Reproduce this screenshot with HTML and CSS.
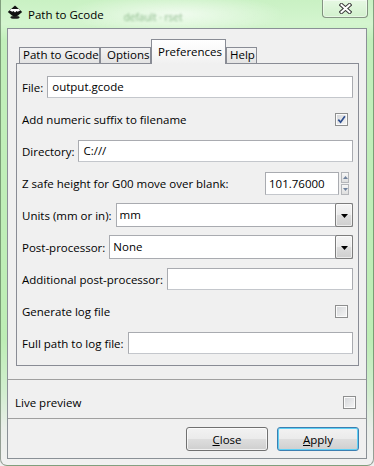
FILE: index.html
```html
<!DOCTYPE html>
<html lang="en">
<head>
<meta charset="utf-8">
<title>Path to Gcode</title>
<link rel="stylesheet" href="styles.css">
</head>
<body>
<div class="window">
  <div class="titlebar">
    <svg class="app-icon" width="16" height="14" viewBox="0 0 16 14" aria-hidden="true">
      <ellipse cx="8" cy="12.4" rx="4.6" ry="1.4" fill="#1c1c1c"/>
      <path d="M8 0.4 L15.2 7 L11 10.4 Q8 12.2 5 10.4 L0.8 7 Z" fill="#111"/>
      <path d="M4.3 3.9 L11.7 3.9 L13.2 5.4 L10.6 6.8 L9.6 5.9 L8 7.5 L6.5 6.1 L5.3 6.8 L2.8 5.4 Z" fill="#fff"/>
    </svg>
    <span class="title">Path to Gcode</span>
    <span class="ghost">default · rset</span>
    <div class="close-btn">
      <svg width="13" height="11" viewBox="0 0 13 11" aria-hidden="true">
        <path d="M2.5 2 L10.5 9 M10.5 2 L2.5 9" stroke="#3b3b3b" stroke-width="4" stroke-linecap="square"/>
        <path d="M2.5 2 L10.5 9 M10.5 2 L2.5 9" stroke="#fff" stroke-width="2" stroke-linecap="square"/>
      </svg>
    </div>
  </div>

  <div class="client">
    <div class="notebook">
      <div class="tabstrip">
        <div class="tab tab-gcode">Path to Gcode</div>
        <div class="tab tab-options">Options</div>
        <div class="tab tab-prefs active">Preferences</div>
        <div class="tab tab-help">Help</div>
      </div>
      <div class="panel">
        <div class="row">
          <span class="label">File:</span>
          <div class="field">output.gcode</div>
        </div>
        <div class="row">
          <span class="label">Add numeric suffix to filename</span>
          <div class="check checked">
            <svg width="11" height="11" viewBox="0 0 11 11" aria-hidden="true">
              <path d="M2.3 5.6 L4.6 8.2 L8.9 2.2" fill="none" stroke="#2f4f8f" stroke-width="1.7"/>
            </svg>
          </div>
        </div>
        <div class="row">
          <span class="label">Directory:</span>
          <div class="field">C:///</div>
        </div>
        <div class="row">
          <span class="label">Z safe height for G00 move over blank:</span>
          <div class="spin-input">101.76000</div>
          <div class="spin-btns">
            <i><svg width="5" height="3" viewBox="0 0 5 3"><path d="M0 3h5L2.5 0z" fill="#6f819c"/></svg></i>
            <i><svg width="5" height="3" viewBox="0 0 5 3"><path d="M0 0h5L2.5 3z" fill="#6f819c"/></svg></i>
          </div>
        </div>
        <div class="row">
          <span class="label">Units (mm or in):</span>
          <div class="combo">
            <span class="combo-text">mm</span>
            <span class="combo-btn"><svg width="7" height="4" viewBox="0 0 7 4"><path d="M0 0h7L3.5 4z" fill="#000"/></svg></span>
          </div>
        </div>
        <div class="row">
          <span class="label">Post-processor:</span>
          <div class="combo">
            <span class="combo-text">None</span>
            <span class="combo-btn"><svg width="7" height="4" viewBox="0 0 7 4"><path d="M0 0h7L3.5 4z" fill="#000"/></svg></span>
          </div>
        </div>
        <div class="row">
          <span class="label">Additional post-processor:</span>
          <div class="field"></div>
        </div>
        <div class="row">
          <span class="label">Generate log file</span>
          <div class="check"></div>
        </div>
        <div class="row">
          <span class="label">Full path to log file:</span>
          <div class="field"></div>
        </div>
      </div>
    </div>

    <div class="sep"></div>
    <div class="live">
      <span class="label">Live preview</span>
      <div class="check"></div>
    </div>
    <div class="sep"></div>
    <div class="buttons">
      <button class="btn" type="button"><u>C</u>lose</button>
      <button class="btn default" type="button"><u>A</u>pply</button>
    </div>
  </div>
</div>
</body>
</html>
```

FILE: styles.css
```css
html, body {
  margin: 0;
  padding: 0;
}

body {
  font-family: "Open Sans", "Noto Sans", "DejaVu Sans", sans-serif;
  font-size: 11.5px;
  color: #000;
  background: #f0f0f0;
}

.window {
  width: 374px;
  height: 466px;
  box-sizing: border-box;
  border: 1px solid rgba(40, 60, 40, 0.45);
  border-top: 0;
  border-radius: 0 0 7px 7px;
  overflow: hidden;
  background:
    radial-gradient(ellipse 110px 20px at 175px 14px, rgba(255, 255, 255, 0.7), rgba(255, 255, 255, 0)),
    linear-gradient(to bottom, #c9f1c3 0, #d4f5cf 24px, #c2efbb 40px, #bdedb5 340px, #d2eecf 392px, #e9eee9 428px, #f1f1f1 100%);
}

/* ---------- title bar ---------- */
.titlebar {
  height: 28px;
  display: flex;
  align-items: center;
  padding-left: 6px;
}

.app-icon {
  align-self: flex-start;
  margin-top: 5px;
  flex: none;
}

.title {
  margin-left: 5px;
  font-size: 11.5px;
  color: #000;
}

.ghost {
  margin-left: 20px;
  margin-top: 6px;
  font-size: 10px;
  color: rgba(60, 130, 60, 0.55);
  filter: blur(1.1px);
}

.close-btn {
  margin-left: auto;
  margin-right: 5px;
  align-self: flex-start;
  width: 46px;
  height: 18px;
  box-sizing: border-box;
  border: 1px solid rgba(40, 50, 40, 0.5);
  border-top: 0;
  border-radius: 0 0 4px 4px;
  background: linear-gradient(#e6f8e3, #d2f1cd);
  box-shadow: inset 0 0 0 1px rgba(255, 255, 255, 0.45);
  display: flex;
  align-items: center;
  justify-content: center;
}

/* ---------- client area ---------- */
.client {
  margin-left: 6px;
  width: 360px;
  height: 431px;
  box-sizing: border-box;
  border: 1px solid #8a9096;
  background: #f0f0f0;
}

.notebook {
  margin: 10px 7px 13px 8px;
}

.tabstrip {
  display: flex;
  align-items: flex-end;
  height: 24px;
  padding-left: 3px;
  position: relative;
  z-index: 1;
}

.tab {
  box-sizing: border-box;
  height: 16px;
  border: 1px solid #898c95;
  border-bottom: 0;
  background: linear-gradient(#f3f3f3, #e3e3e3);
  line-height: 12px;
  padding-top: 1px;
  white-space: nowrap;
  flex: none;
}

.tab-gcode { width: 81px; padding-left: 3px; }
.tab-options { width: 51px; padding-left: 6px; }
.tab-prefs { width: 75px; padding-left: 6px; }
.tab-help { width: 31px; padding-left: 3px; }

.tab.active {
  height: 25px;
  margin-bottom: -1px;
  padding-top: 4px;
  line-height: 16px;
  background: linear-gradient(#ffffff, #f7f7f7 60%, #f0f0f0);
}

.panel {
  box-sizing: border-box;
  height: 303px;
  border: 1px solid #898c95;
  background: #f0f0f0;
  padding: 7px 5px 6px;
  display: flex;
  flex-direction: column;
}

.row {
  height: 32px;
  display: flex;
  align-items: center;
  gap: 4px;
}

.label {
  white-space: nowrap;
  flex: none;
}

.field {
  flex: 1;
  box-sizing: border-box;
  height: 22px;
  border: 1px solid #a9abb0;
  border-bottom-color: #c4c7cc;
  background: #fff;
  padding: 0 4px;
  line-height: 20px;
}

.check {
  margin-left: auto;
  margin-right: 5px;
  width: 13px;
  height: 13px;
  box-sizing: border-box;
  border: 1px solid #8e8f8f;
  background: linear-gradient(135deg, #d4d6d9, #f6f6f6);
  box-shadow: inset 0 0 0 1px #fbfbfb;
  display: flex;
  align-items: center;
  justify-content: center;
  flex: none;
}

.spin-input {
  margin-left: auto;
  width: 74px;
  height: 23px;
  box-sizing: border-box;
  border: 1px solid #a9abb0;
  border-bottom-color: #c4c7cc;
  background: #fff;
  padding-left: 3px;
  line-height: 21px;
  flex: none;
}

.spin-btns {
  width: 8px;
  height: 23px;
  margin: 0 4px 0 -2px;
  display: flex;
  flex-direction: column;
  gap: 1px;
  flex: none;
}

.spin-btns i {
  flex: 1;
  box-sizing: border-box;
  border: 1px solid #b4b6ba;
  background: linear-gradient(#f7f7f7, #dedede);
  display: flex;
  align-items: center;
  justify-content: center;
}

.combo {
  flex: 1;
  height: 24px;
  box-sizing: border-box;
  border: 1px solid #a9abb0;
  background: #fff;
  display: flex;
}

.combo-text {
  flex: 1;
  padding-left: 3px;
  line-height: 22px;
}

.combo-btn {
  width: 18px;
  box-sizing: border-box;
  margin: -1px -1px -1px 0;
  border: 1px solid #7d7d7d;
  border-radius: 2px;
  background: linear-gradient(#f5f5f5, #ebebeb 48%, #dcdcdc 52%, #cfcfcf);
  box-shadow: inset 0 0 0 1px rgba(255, 255, 255, 0.6);
  display: flex;
  align-items: center;
  justify-content: center;
  padding-top: 1px;
}

/* ---------- bottom ---------- */
.sep {
  height: 0;
  border-top: 1px solid #a0a0a0;
}

.live {
  height: 38px;
  box-sizing: border-box;
  padding: 7px 10px 0 7px;
  display: flex;
  align-items: center;
}

.live .check {
  margin-right: 0;
}

.buttons {
  display: flex;
  justify-content: flex-end;
  gap: 9px;
  padding: 8px 7px 0;
}

.btn {
  width: 82px;
  height: 24px;
  box-sizing: border-box;
  margin: 0;
  padding: 0;
  border: 1px solid #707070;
  border-radius: 3px;
  background: linear-gradient(#f2f2f2 0%, #ebebeb 48%, #dddddd 52%, #cfcfcf 100%);
  box-shadow: inset 0 0 0 1px rgba(255, 255, 255, 0.7);
  font: inherit;
  color: #000;
  display: flex;
  align-items: center;
  justify-content: center;
}

.btn.default {
  border-color: #3c7fb1;
  box-shadow: inset 0 0 0 1px #5fd0f5;
}
```
